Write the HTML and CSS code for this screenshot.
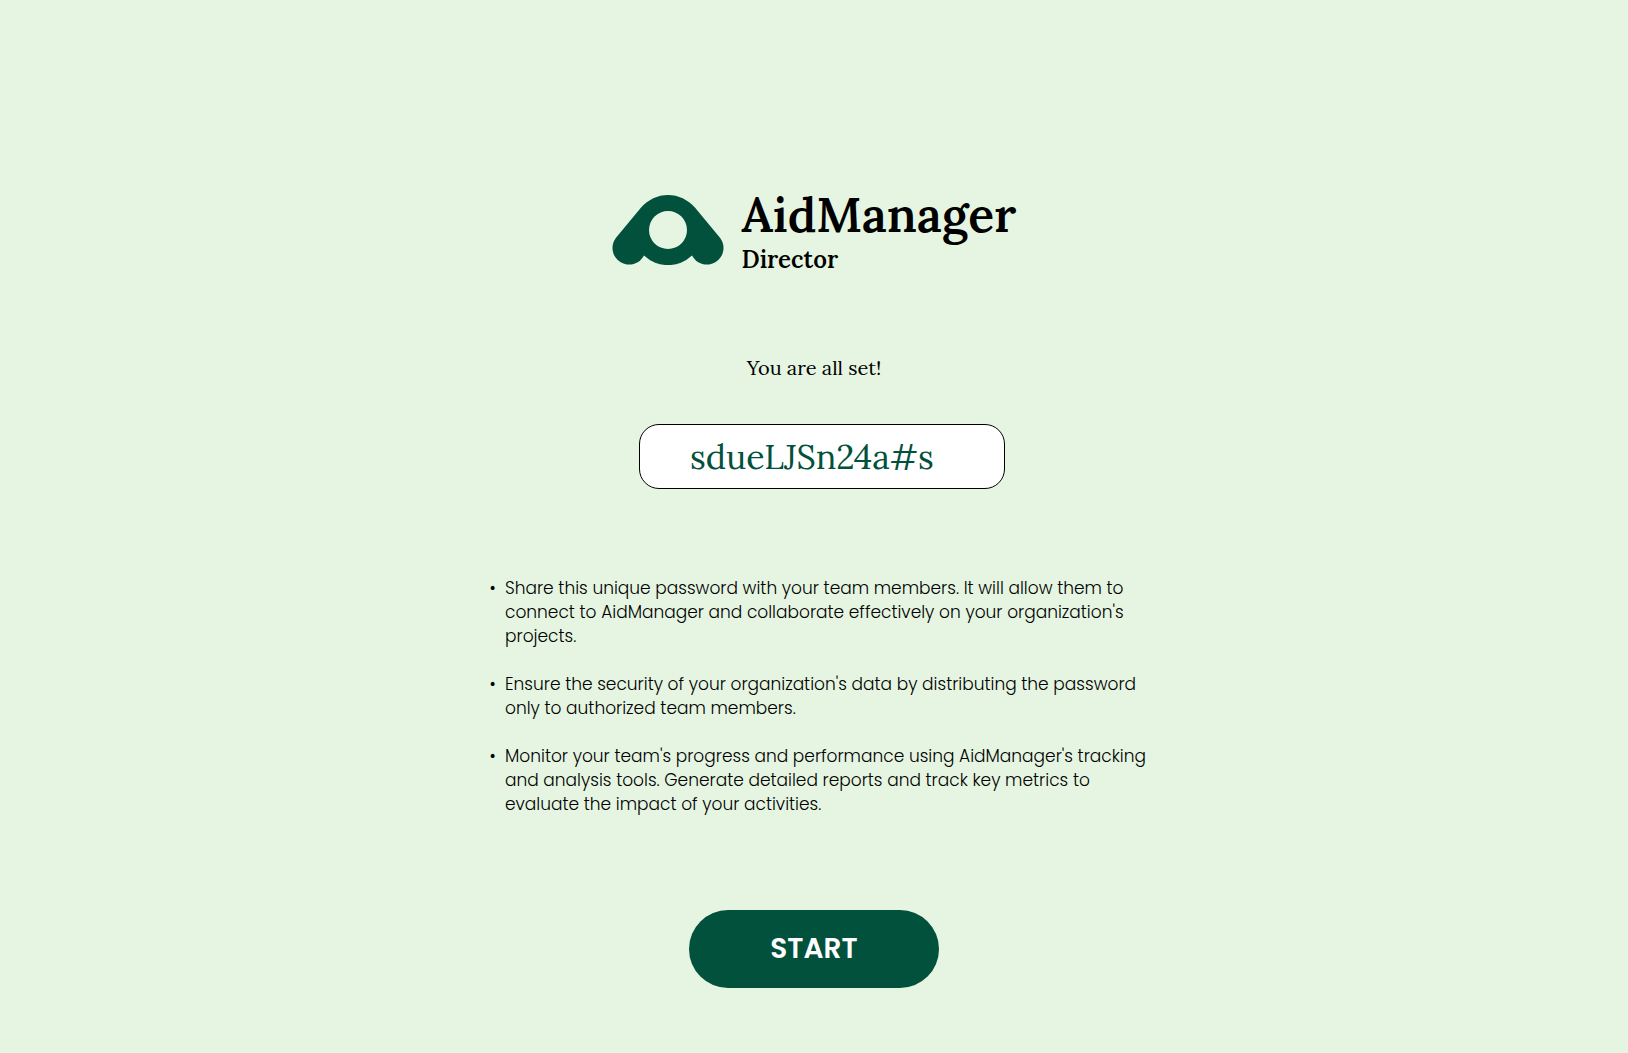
FILE: index.html
```html
<!DOCTYPE html>
<html lang="en">
<head>
  <meta charset="utf-8">
  <meta name="viewport" content="width=device-width, initial-scale=1">
  <title>AidManager</title>
  <link rel="stylesheet" href="styles.css">
</head>
<body>
  <main class="page">
    <header class="brand">
      <svg class="brand-mark" viewBox="0 0 112 70" aria-hidden="true">
        <path fill="currentColor" fill-rule="evenodd" d="M56 0C66.400 0 75.900 4.700 82.900 12.600L108.200 42.900A16.700 16.700 0 1 1 80 60.600A35 35 0 0 1 32 60.600A16.700 16.700 0 1 1 3.800 42.900L29.100 12.600C36.100 4.700 45.600 0 56 0ZM56 16A19 19 0 1 0 56 54A19 19 0 1 0 56 16Z"/>
      </svg>
      <div class="brand-text">
        <h1 class="brand-name">AidManager</h1>
        <p class="brand-role">Director</p>
      </div>
    </header>

    <label class="message" for="team-password">You are all set!</label>
    <input class="password" id="team-password" type="text" value="sdueLJSn24a#s" readonly>

    <ul class="tips">
      <li>Share this unique password with your team members. It will allow them to<br>connect to AidManager and collaborate effectively on your organization's<br>projects.</li>
      <li>Ensure the security of your organization's data by distributing the password<br>only to authorized team members.</li>
      <li>Monitor your team's progress and performance using AidManager's tracking<br>and analysis tools. Generate detailed reports and track key metrics to<br>evaluate the impact of your activities.</li>
    </ul>

    <button class="start" type="button">START</button>
  </main>
</body>
</html>
```
FILE: styles.css
```css
* {
  box-sizing: border-box;
}

body {
  margin: 0;
  background: #e5f5e1;
  color: #000;
  font-family: Poppins, Inter, sans-serif;
}

.page {
  display: flex;
  flex-direction: column;
  align-items: center;
  padding: 185px 24px 64px;
}

.brand {
  display: flex;
  align-items: center;
  gap: 18px;
  font-family: Lora, "Liberation Serif", serif;
}

.brand-mark {
  width: 112px;
  height: 70px;
  color: #02513c;
}

.brand-name,
.brand-role {
  margin: 0;
  font-weight: 600;
}

.brand-name {
  font-size: 48px;
  line-height: 60px;
}

.brand-role {
  font-size: 24px;
  line-height: 30px;
}

.message {
  margin-top: 81px;
  font-family: Lora, "Liberation Serif", serif;
  font-size: 20px;
  line-height: 24px;
}

.password {
  width: 366px;
  max-width: 100%;
  height: 65px;
  margin: 44px 0 0 16px;
  padding: 0 50px;
  border: 1px solid #000;
  border-radius: 20px;
  background: #fff;
  color: #02513c;
  font-family: Lora, "Liberation Serif", serif;
  font-size: 34px;
}

.tips {
  display: flex;
  flex-direction: column;
  gap: 24px;
  width: 680px;
  max-width: 100%;
  margin: 87px 0 0;
  padding-left: 31px;
  list-style-type: "•  ";
  font-size: 17px;
  font-weight: 300;
  line-height: 24px;
}

.start {
  width: 250px;
  height: 78px;
  margin-top: 94px;
  border: 0;
  border-radius: 39px;
  background: #02513c;
  color: #fff;
  font-family: inherit;
  font-size: 28px;
  font-weight: 600;
}
```
